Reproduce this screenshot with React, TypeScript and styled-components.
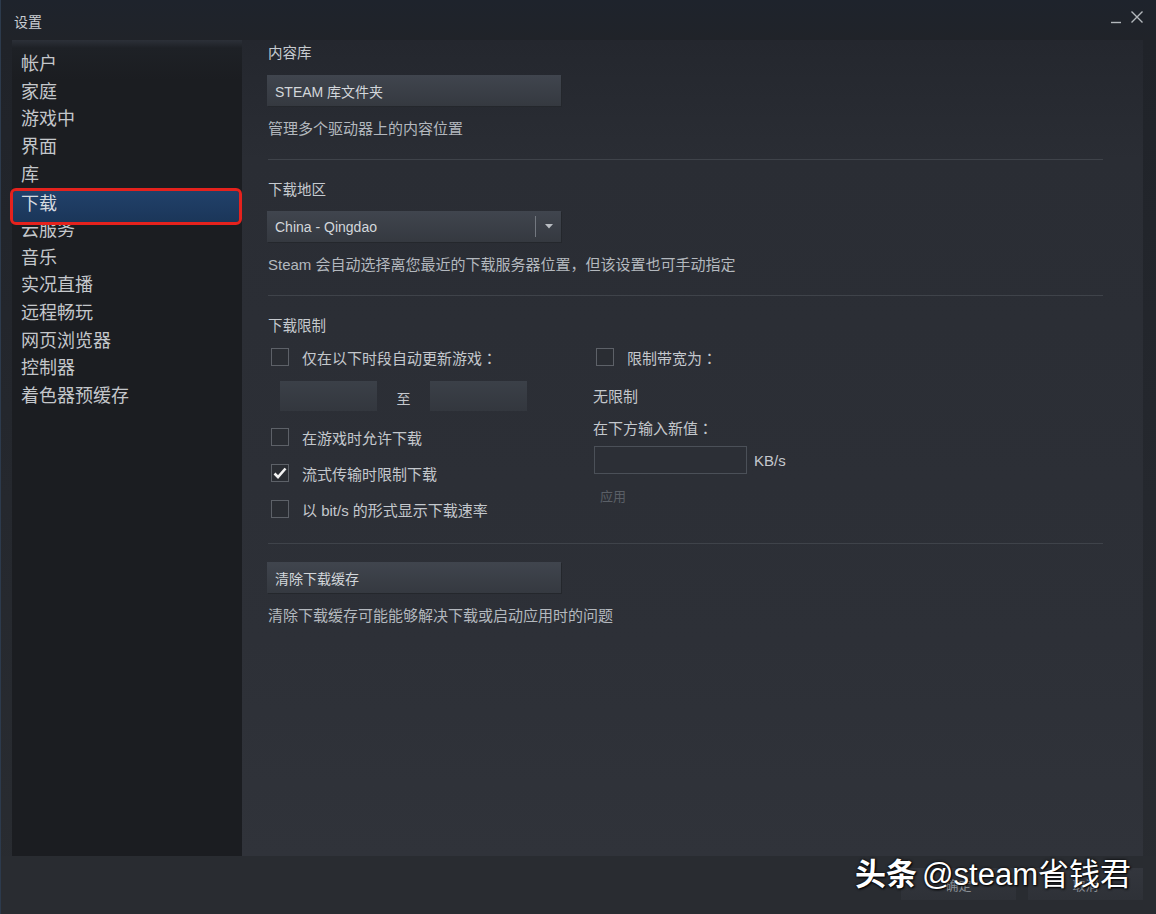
import React from 'react';
import styled, { createGlobalStyle } from 'styled-components';

const GlobalStyle = createGlobalStyle`
  html, body { margin: 0; padding: 0; }
  body {
    background: #22252b;
    font-family: "Liberation Sans", "Noto Sans CJK SC", sans-serif;
  }
`;

/* the whole settings window */
const Window = styled.div`
  width: 1156px;
  height: 914px;
  display: flex;
  flex-direction: column;
  background: linear-gradient(180deg, #1e232c 0, #202329 40px, #25282e 500px, #292c31 100%);
  border-left: 1px solid #2c3a4c;
  box-sizing: border-box;
  overflow: hidden;
`;

const TitleBar = styled.div`
  height: 40px;
  flex: none;
  display: flex;
  align-items: center;
  justify-content: space-between;
  padding: 0 12px 0 13px;
  box-sizing: border-box;
`;

const Title = styled.div`
  font-family: "Noto Sans CJK SC", sans-serif;
  font-size: 14px;
  color: #c9cdd2;
  margin-top: 1px;
`;

const Controls = styled.div`
  display: flex;
  align-items: center;
  gap: 8px;
  margin-top: -6px;
`;

const Body = styled.div`
  flex: 1;
  display: flex;
  padding: 0 13px 0 11px;
  min-height: 0;
`;

const Sidebar = styled.div`
  width: 230px;
  flex: none;
  background: linear-gradient(180deg, #2c3038 0, #1e2126 8px, #1b1d21 40px, #1b1d21 100%);
  padding-top: 9px;
  box-sizing: border-box;
  display: flex;
  flex-direction: column;
`;

const NavItem = styled.div<{ $active?: boolean }>`
  height: 27.67px;
  line-height: 27.67px;
  padding-left: 9px;
  font-family: "Noto Sans CJK SC", sans-serif;
  font-size: 18px;
  color: #c4c7cb;
  white-space: nowrap;
  ${p => p.$active && `
    height: 31px;
    line-height: 22px;
    padding-left: 8px;
    margin: 3.65px 3px -7px 1px;
    color: #d6dbe0;
    background: linear-gradient(180deg, #21416a, #1b3659);
    outline: 3px solid #e5221d;
    outline-offset: 0px;
    border-radius: 3px;
    position: relative;
    z-index: 1;
  `}
`;

const Content = styled.div`
  flex: 1;
  background: linear-gradient(180deg, #24272e 0, #2a2d34 120px, #2d3037 600px, #30333a 100%);
  padding: 3px 40px 0 26px;
  box-sizing: border-box;
  font-family: "Liberation Sans", "Noto Sans CJK SC", sans-serif;
`;

const Heading = styled.div<{ $first?: boolean }>`
  font-size: 14.5px;
  line-height: 20px;
  color: #c6cacf;
  margin-top: ${p => (p.$first ? 0 : 20)}px;
`;

const Desc = styled.div`
  font-size: 15px;
  line-height: 20px;
  color: #b3b8be;
  margin-top: 13px;
`;

const Divider = styled.div<{ $gap?: number }>`
  height: 1px;
  background: #3f434a;
  margin-top: ${p => p.$gap ?? 20}px;
`;

const Button = styled.div<{ $top?: number }>`
  width: 294px;
  height: 31px;
  margin-top: ${p => p.$top ?? 12}px;
  margin-left: -1px;
  padding-left: 8px;
  box-sizing: border-box;
  display: flex;
  align-items: center;
  font-size: 14px;
  color: #d3d7db;
  background: linear-gradient(180deg, #40454e, #353940);
  box-shadow: 1px 1px 0 #24272c;
`;

const Select = styled(Button)`
  justify-content: space-between;
  padding-right: 0;
`;

const SelectArrow = styled.div`
  width: 25px;
  height: 21px;
  border-left: 1px solid #737880;
  display: flex;
  align-items: center;
  justify-content: center;
`;

const LimitGrid = styled.div`
  display: grid;
  grid-template-columns: 325px 1fr;
  margin-top: 11px;
`;

const Column = styled.div`
  display: flex;
  flex-direction: column;
`;

const CheckRow = styled.div<{ $top?: number }>`
  display: flex;
  align-items: center;
  gap: 13px;
  height: 20px;
  margin-top: ${p => p.$top ?? 0}px;
  margin-left: 3px;
  font-size: 15px;
  color: #c4c8cd;
`;

/* full-width colon, centred as in the original font */
const Colon = styled.span`
  font-family: "Noto Sans CJK TC", sans-serif;
`;

const Box = styled.div`
  width: 16px;
  height: 16px;
  flex: none;
  border: 1px solid #5d6168;
  background: #2a2d33;
  display: flex;
  align-items: center;
  justify-content: center;
`;

const TimeRow = styled.div`
  display: flex;
  align-items: center;
  margin: 14px 0 0 12px;
  font-family: "Noto Sans CJK SC", sans-serif;
  font-size: 14px;
  color: #c4c8cd;
`;

const TimeField = styled.div`
  width: 97px;
  height: 30px;
  background: linear-gradient(180deg, #3b4048, #33373e);
`;

const To = styled.div`
  width: 53px;
  text-align: center;
  padding-top: 4px;
`;

const Note = styled.div<{ $top: number; $dim?: boolean }>`
  font-size: ${p => (p.$dim ? 13 : 15)}px;
  line-height: 20px;
  margin-top: ${p => p.$top}px;
  margin-left: ${p => (p.$dim ? 7 : 0)}px;
  color: ${p => (p.$dim ? '#5a5f66' : '#c4c8cd')};
`;

const RateRow = styled.div`
  display: flex;
  align-items: center;
  gap: 7px;
  margin-top: 7px;
  font-size: 15px;
  color: #c4c8cd;
`;

const RateInput = styled.div`
  width: 153px;
  height: 28px;
  box-sizing: border-box;
  margin-left: 1px;
  border: 1px solid #4b5058;
  background: #2c2f36;
`;

const Footer = styled.div`
  height: 58px;
  flex: none;
  position: relative;
  display: flex;
  justify-content: flex-end;
  gap: 12px;
  padding: 12px 13px 0 0;
  box-sizing: border-box;
  background: #292c31;
`;

const FooterButton = styled.div`
  width: 115px;
  height: 32px;
  background: linear-gradient(180deg, #33363d, #2e3137);
  display: flex;
  align-items: center;
  justify-content: center;
  font-family: "Noto Sans CJK SC", sans-serif;
  font-size: 13px;
  color: #8b9096;
`;

/* the watermark that was pasted over the screenshot */
const Watermark = styled.div`
  position: absolute;
  right: 25px;
  top: -2px;
  font-family: "Noto Sans CJK SC", "Liberation Sans", sans-serif;
  font-size: 31px;
  line-height: 36px;
  color: #ffffff;
  white-space: nowrap;
  text-shadow: 0 0 3px #000, 1px 1px 2px #000;
  b { font-weight: 700; margin-right: 5px; }
  span { font-family: "Liberation Sans", "Noto Sans CJK SC", sans-serif; }
`;

const Check = () => (
  <svg width="14" height="12" viewBox="0 0 14 12">
    <path d="M1.5 6.5 L5 10 L12.5 1.5" fill="none" stroke="#f2f2f2" strokeWidth="2.6" />
  </svg>
);

const navItems = ['帐户', '家庭', '游戏中', '界面', '库', '下载', '云服务', '音乐', '实况直播', '远程畅玩', '网页浏览器', '控制器', '着色器预缓存'];

const App: React.FC = () => {
  return (
    <>
      <GlobalStyle />
      <Window>
        <TitleBar>
          <Title>设置</Title>
          <Controls>
            <svg width="12" height="14" viewBox="0 0 12 14">
              <path d="M1 12.5 H11" stroke="#b4b8bd" strokeWidth="1.4" />
            </svg>
            <svg width="14" height="14" viewBox="0 0 14 14">
              <path d="M1.5 1.5 L12.5 12.5 M12.5 1.5 L1.5 12.5" stroke="#b4b8bd" strokeWidth="1.4" />
            </svg>
          </Controls>
        </TitleBar>

        <Body>
          <Sidebar>
            {navItems.map(item => (
              <NavItem key={item} $active={item === '下载'}>{item}</NavItem>
            ))}
          </Sidebar>

          <Content>
            <Heading $first>内容库</Heading>
            <Button>STEAM 库文件夹</Button>
            <Desc>管理多个驱动器上的内容位置</Desc>
            <Divider />

            <Heading>下载地区</Heading>
            <Select $top={11}>
              China - Qingdao
              <SelectArrow>
                <svg width="8" height="5" viewBox="0 0 8 5">
                  <path d="M0 0 H8 L4 4.5 Z" fill="#b9bdc2" />
                </svg>
              </SelectArrow>
            </Select>
            <Desc>Steam 会自动选择离您最近的下载服务器位置，但该设置也可手动指定</Desc>
            <Divider />

            <Heading>下载限制</Heading>
            <LimitGrid>
              <Column>
                <CheckRow><Box /><span>仅在以下时段自动更新游戏<Colon>：</Colon></span></CheckRow>
                <TimeRow>
                  <TimeField />
                  <To>至</To>
                  <TimeField />
                </TimeRow>
                <CheckRow $top={16}><Box /><span>在游戏时允许下载</span></CheckRow>
                <CheckRow $top={16}><Box><Check /></Box><span>流式传输时限制下载</span></CheckRow>
                <CheckRow $top={16}><Box /><span>以 bit/s 的形式显示下载速率</span></CheckRow>
              </Column>
              <Column>
                <CheckRow><Box /><span>限制带宽为<Colon>：</Colon></span></CheckRow>
                <Note $top={20}>无限制</Note>
                <Note $top={11}>在下方输入新值<Colon>：</Colon></Note>
                <RateRow>
                  <RateInput />
                  KB/s
                </RateRow>
                <Note $top={13} $dim>应用</Note>
              </Column>
            </LimitGrid>
            <Divider $gap={24} />

            <Button $top={18}>清除下载缓存</Button>
            <Desc>清除下载缓存可能能够解决下载或启动应用时的问题</Desc>
          </Content>
        </Body>

        <Footer>
          <FooterButton>确定</FooterButton>
          <FooterButton>取消</FooterButton>
          <Watermark><b>头条</b><span>@steam</span>省钱君</Watermark>
        </Footer>
      </Window>
    </>
  );
};

export default App;
